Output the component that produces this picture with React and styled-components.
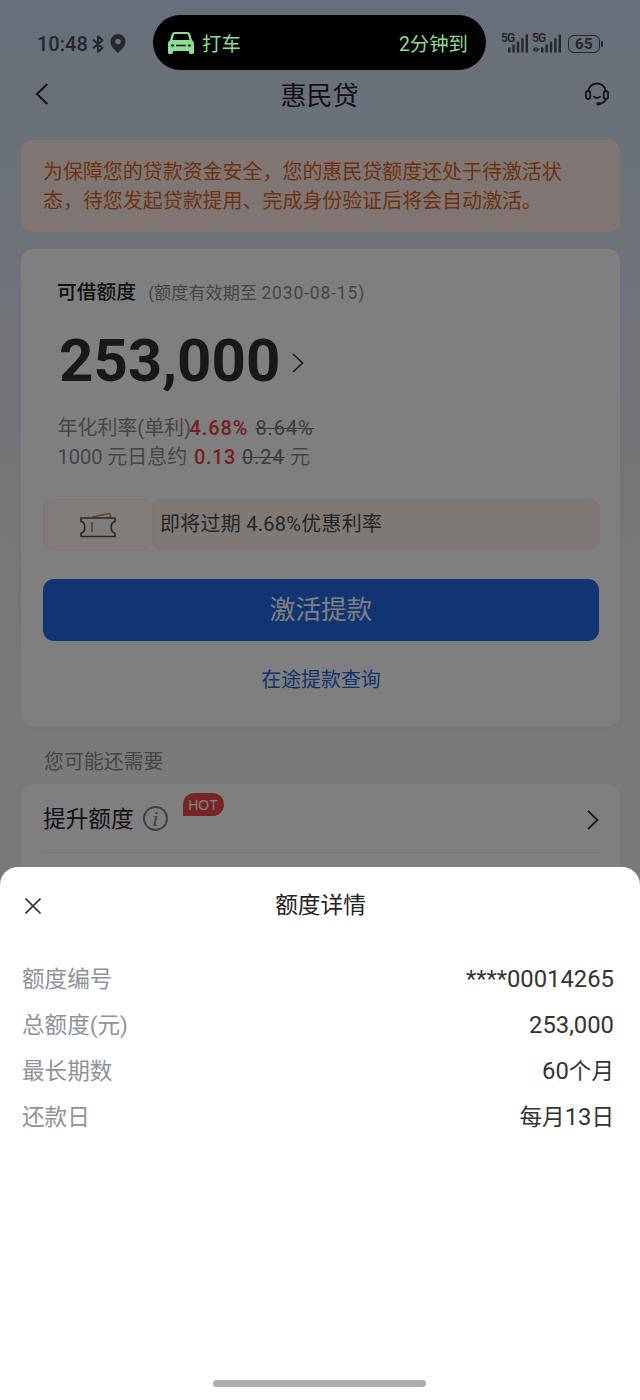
import React from 'react'
import styled, { createGlobalStyle } from 'styled-components'

const GlobalStyle = createGlobalStyle`
    * { box-sizing: border-box; }
    body {
        margin: 0;
        font-family: Roboto, "Noto Sans CJK SC", sans-serif;
        color: #333;
        -webkit-font-smoothing: antialiased;
    }
`

const details = [
    { label: '额度编号', number: '****00014265' },
    { label: '总额度(元)', number: '253,000' },
    { label: '最长期数', number: '60', after: '个月' },
    { label: '还款日', before: '每月', number: '13', after: '日' },
]

/* ---------- icons ---------- */

const Bluetooth = () => (
    <svg width="12" height="18" viewBox="0 0 12 18" fill="none" stroke="#4a4f5b" strokeWidth="2" strokeLinejoin="round">
        <path d="M1 4.800l9.600 8L6 16.800V1.200l4.600 4L1 13.200" />
    </svg>
)

const Pin = () => (
    <svg width="16" height="19" viewBox="0 0 16 19" fill="#4a4f5b" fillRule="evenodd">
        <path d="M8 0a7.600 7.600 0 0 1 7.600 7.600C15.600 12.400 10.600 16.800 8 19 5.400 16.800.4 12.400.4 7.600A7.600 7.600 0 0 1 8 0zm0 4.800a2.700 2.700 0 1 0 0 5.400 2.700 2.700 0 0 0 0-5.400z" />
    </svg>
)

const Car = () => (
    <svg width="28" height="24" viewBox="0 0 28 24">
        <path fill="#8fdc94" fillRule="evenodd" d="M8.300 1h11.400c2 0 3.200.8 3.700 2.600L25 9.200c1.400.8 2 2 2 3.600v8.700a1.500 1.500 0 0 1-1.500 1.500h-2a1.500 1.500 0 0 1-1.500-1.500V20H6v1.500A1.500 1.500 0 0 1 4.500 23h-2A1.500 1.500 0 0 1 1 21.500v-8.700c0-1.600.6-2.800 2-3.600l1.600-5.600C5.100 1.800 6.300 1 8.300 1zm.4 2c-1.200 0-1.700.4-2 1.500L5.500 9h17l-1.200-4.500c-.3-1.100-.8-1.500-2-1.500z" />
        <circle cx="5.600" cy="14.500" r="1.300" fill="#000" />
        <circle cx="22.400" cy="14.500" r="1.300" fill="#000" />
        <path d="M9 14.500h10" stroke="#000" strokeWidth="1.400" />
    </svg>
)

const Bars = ({ arrows }) => (
    <svg width="21" height="19" viewBox="0 0 21 19" overflow="visible" fill="#4a4f5b">
        <rect x="0" y="13.500" width="2.400" height="5" />
        <rect x="4.400" y="10.500" width="2.400" height="8" />
        <rect x="8.800" y="7.500" width="2.400" height="11" />
        <rect x="13.200" y="4.200" width="2.400" height="14.300" />
        <rect x="17.600" y="0.500" width="2.400" height="18" />
        {arrows && <path d="M-5.500 12.500v6l-2.800-3zM-4.500 12.500v6l2.800-3z" />}
    </svg>
)

const Back = () => (
    <svg width="14" height="22" viewBox="0 0 14 22" fill="none" stroke="#2d313b" strokeWidth="2.200">
        <path d="M12.300 1L2 11l10.300 10" />
    </svg>
)

const Chevron = ({ weight = 1.8 }) => (
    <svg width="12" height="20" viewBox="0 0 12 20" fill="none" stroke="#333" strokeWidth={weight}>
        <path d="M1 1l9.500 9L1 19" />
    </svg>
)

const Headset = () => (
    <svg width="26" height="26" viewBox="0 0 26 26" fill="none" stroke="#2d313b" strokeWidth="1.900" strokeLinecap="round">
        <path d="M4.200 10a8.900 8.900 0 0 1 17.600 0" />
        <rect x="2" y="10" width="4.200" height="8" rx="2.100" />
        <rect x="19.800" y="10" width="4.200" height="8" rx="2.100" />
        <path d="M10 15.700c1.600 1.800 4.400 1.800 6 0" />
        <path d="M22 18c-.8 3-3 4.200-7.500 4.800" />
        <path d="M13.800 22.800h1.600" strokeWidth="3" />
    </svg>
)

const Ticket = () => (
    <svg width="36" height="26" viewBox="0 0 36 26" fill="none" strokeWidth="1.600" strokeLinejoin="round">
        <path d="M12 5L29.500 1.500l1.500 4" stroke="#d98a5a" />
        <path d="M1 6h34v3.200c-2.600.8-3.800 3-3.800 6s1.200 5.200 3.800 6v3.300H1v-3.300c2.600-.8 3.800-3 3.800-6s-1.200-5.200-3.800-6z" stroke="#505050" />
        <path d="M12 10v10" stroke="#d98a5a" strokeWidth="2" />
    </svg>
)

const Close = () => (
    <svg width="16" height="16" viewBox="0 0 16 16" fill="none" stroke="#333" strokeWidth="1.600">
        <path d="M.5.500l15 15M15.500.500l-15 15" />
    </svg>
)

/* ---------- page ---------- */

const Phone = styled.div`
    position: relative;
    width: 640px;
    height: 1400px;
    overflow: hidden;
    background: linear-gradient(180deg, #cbe0f5 0, #d3e0f5 70px, #d5e3f6 140px, #dde5f3 240px, #e6e8f1 400px, #efeff1 520px, #f5f5f5 740px);
`

const StatusBar = styled.div`
    display: flex;
    align-items: center;
    height: 70px;
    padding: 17px 40px 0 37px;
`

const Clock = styled.span`
    width: 55px;
    font-size: 20px;
    font-weight: 500;
    line-height: 24px;
    color: #4a4f5b;
`

const StatusIcons = styled.div`
    display: flex;
    align-items: center;
    gap: 6px;
`

const Signals = styled.div`
    display: flex;
    align-items: center;
    margin-left: auto;
`

const Signal = styled.div`
    display: flex;
    align-items: flex-start;
    margin-right: ${props => props.$gap}px;
    svg { margin-left: ${props => props.$pull}px; }
`

const NetType = styled.span`
    width: 14px;
    margin-left: -1px;
    padding-right: 1px;
    font-size: 12px;
    line-height: 9px;
    font-weight: 600;
    letter-spacing: -.8px;
    color: #4a4f5b;
`

const Battery = styled.div`
    position: relative;
    display: flex;
    align-items: center;
    justify-content: center;
    width: 32px;
    height: 18px;
    border: 1.500px solid #4a4f5b;
    border-radius: 6px;
    font-size: 15px;
    font-weight: 700;
    line-height: 14px;
    letter-spacing: .5px;
    color: #4a4f5b;
    &::after {
        content: '';
        position: absolute;
        right: -4px;
        top: 5px;
        width: 2px;
        height: 6px;
        border-radius: 1px;
        background: #4a4f5b;
    }
`

const NavBar = styled.header`
    display: flex;
    align-items: center;
    justify-content: space-between;
    height: 48px;
    padding: 0 30px 0 35px;
`

const NavTitle = styled.h1`
    margin: 3px 0 0 6px;
    font-size: 26px;
    font-weight: 400;
    line-height: 36px;
    color: #222;
`

const Main = styled.main`
    display: flex;
    flex-direction: column;
    padding: 22px 20px 0 21px;
`

const Notice = styled.p`
    height: 92px;
    margin: 0 0 17px;
    padding: 18px 22px;
    border-radius: 12px;
    background: #ffede6;
    font-size: 19.970px;
    line-height: 29px;
    color: #dc6424;
`

const Card = styled.section`
    height: ${props => props.$height}px;
    padding: 0 21px 0 22px;
    border-radius: 12px;
    background: #fff;
    box-shadow: 0 2px 8px rgba(0, 0, 0, .04);
`

const LimitHead = styled.div`
    display: flex;
    align-items: center;
    gap: 12px;
    padding: 29px 15px 0 14px;
    line-height: 30px;
`

const LimitTitle = styled.h2`
    margin: 0;
    font-size: 19.800px;
    font-weight: 500;
    color: #222;
`

const LimitNote = styled.span`
    font-size: 17px;
    letter-spacing: .15px;
    color: #8c8c8c;
`

const LimitDate = styled.span`
    font-size: 17.500px;
    letter-spacing: .85px;
`

const Amount = styled.div`
    display: flex;
    align-items: center;
    gap: 12px;
    height: 70px;
    margin: 20px 0 16px;
    padding-left: 16px;
    font-size: 60px;
    font-weight: 700;
    line-height: 66px;
    color: #303030;
`

const AmountValue = styled.span`
    height: 70px;
`

const RateLine = styled.div`
    display: flex;
    padding-left: 14.500px;
    height: 29px;
    font-size: 19.970px;
    line-height: 29px;
    color: #8c8c8c;
    white-space: pre;
`

const Rate = styled.span`
    width: ${props => props.$width}px;
    letter-spacing: ${props => props.$spacing || 0}px;
    font-weight: ${props => (props.$hot ? 500 : 400)};
    color: ${props => (props.$hot ? '#ec4044' : 'inherit')};
`

const OldRate = styled.s`
    width: ${props => props.$width}px;
    letter-spacing: .9px;
    color: #777;
`

const Coupon = styled.div`
    display: flex;
    height: 51px;
    margin-top: 27px;
    color: #4c4c4c;
`

const CouponIcon = styled.div`
    display: flex;
    align-items: center;
    justify-content: center;
    width: 109px;
    border: 1px solid #fbeee8;
    border-right: none;
    border-radius: 9px;
    background: #fff8f5;
`

const CouponText = styled.div`
    flex: 1;
    padding-left: 7px;
    border: 1px solid #fbeae2;
    border-radius: 9px;
    background: #fff2ec;
    font-size: 19.970px;
    line-height: 49px;
    letter-spacing: .3px;
`

const Submit = styled.button`
    display: block;
    width: 100%;
    height: 62px;
    margin-top: 29px;
    padding: 0;
    border: none;
    border-radius: 11px;
    background: #2568e6;
    font-family: inherit;
    font-size: 25.600px;
    line-height: 63px;
    color: #fff;
`

const QueryLink = styled.a`
    display: block;
    margin-top: 25px;
    font-size: 19.900px;
    line-height: 30px;
    text-align: center;
    color: #2765e0;
`

const SectionTitle = styled.h3`
    margin: 0;
    padding: 22px 23px 0;
    height: 58px;
    font-size: 19.900px;
    font-weight: 400;
    line-height: 30px;
    color: #8c8c8c;
`

const MenuRow = styled.div`
    position: relative;
    display: flex;
    align-items: center;
    height: 69px;
    padding-top: 4px;
    border-bottom: 1px solid #f2f2f2;
    font-size: 22.700px;
    line-height: 34px;
    color: #222;
    > svg { margin-left: auto; }
`

const Info = styled.span`
    display: flex;
    align-items: center;
    justify-content: center;
    width: 25px;
    height: 25px;
    margin: -3px 0 0 9px;
    border: 2px solid #80838c;
    border-radius: 50%;
    font-family: "Liberation Serif", serif;
    font-size: 22px;
    font-style: italic;
    line-height: 20px;
    color: #80838c;
`

const HotBadge = styled.span`
    position: absolute;
    left: 139.500px;
    top: 9px;
    width: 41px;
    height: 23px;
    border-radius: 12px 12px 12px 0;
    background: #ec4a48;
    font-family: "Liberation Sans", sans-serif;
    font-size: 14px;
    line-height: 24px;
    text-align: center;
    color: #fff;
`

const Mask = styled.div`
    position: absolute;
    inset: 0;
    background: rgba(0, 0, 0, .5);
`

const Island = styled.div`
    position: absolute;
    left: 153px;
    top: 15px;
    display: flex;
    align-items: center;
    width: 333px;
    height: 55px;
    padding: 0 18px 0 14px;
    border-radius: 28px;
    background: #000;
    font-size: 19.400px;
    line-height: 28px;
    color: #8fdc94;
    svg { margin-right: 7px; }
`

const IslandText = styled.span`
    padding-top: 4px;
    &:last-child { margin-left: auto; }
`

const Sheet = styled.section`
    position: absolute;
    left: 0;
    right: 0;
    bottom: 0;
    display: flex;
    flex-direction: column;
    height: 533px;
    padding: 0 26px 13px 22px;
    border-radius: 18px 18px 0 0;
    background: #fff;
`

const SheetHead = styled.div`
    display: flex;
    align-items: center;
    height: 78px;
    margin-bottom: 12px;
    padding-left: 3px;
`

const SheetTitle = styled.h2`
    flex: 1;
    margin: 0 14px 0 0;
    font-size: 22.700px;
    font-weight: 400;
    line-height: 34px;
    text-align: center;
    color: #222;
`

const DetailRow = styled.div`
    display: flex;
    align-items: center;
    justify-content: space-between;
    height: 46px;
    font-size: 22.600px;
    line-height: 34px;
`

const Label = styled.span`
    color: #8e929b;
`

const Value = styled.span`
    margin: -2px 0 0;
    color: #333;
`

const Digits = styled.span`
    font-size: 23.800px;
`

const HomeBar = styled.div`
    width: 213px;
    height: 7px;
    margin: auto auto 0 191px;
    border-radius: 4px;
    background: #acacac;
`

function LoanPage() {
    return (
        <>
            <StatusBar>
                <Clock>10:48</Clock>
                <StatusIcons>
                    <Bluetooth />
                    <Pin />
                </StatusIcons>
                <Signals>
                    <Signal $pull={-7} $gap={4}>
                        <NetType>5G</NetType>
                        <Bars />
                    </Signal>
                    <Signal $pull={-5} $gap={6}>
                        <NetType>5G</NetType>
                        <Bars arrows />
                    </Signal>
                    <Battery>65</Battery>
                </Signals>
            </StatusBar>
            <NavBar>
                <Back />
                <NavTitle>惠民贷</NavTitle>
                <Headset />
            </NavBar>
            <Main>
                <Notice>为保障您的贷款资金安全，您的惠民贷额度还处于待激活状态，待您发起贷款提用、完成身份验证后将会自动激活。</Notice>
                <Card $height={477}>
                    <LimitHead>
                        <LimitTitle>可借额度</LimitTitle>
                        <LimitNote>(额度有效期至 <LimitDate>2030-08-15)</LimitDate></LimitNote>
                    </LimitHead>
                    <Amount>
                        <AmountValue>253,000</AmountValue>
                        <Chevron weight={1.6} />
                    </Amount>
                    <RateLine>
                        <Rate $width={132}>年化利率(单利)</Rate>
                        <Rate $hot $width={66} $spacing={0.9}>4.68%</Rate>
                        <OldRate $width={60}>8.64%</OldRate>
                    </RateLine>
                    <RateLine>
                        <Rate $width={136.5}>1000 元日息约</Rate>
                        <Rate $hot $width={48} $spacing={0.6}>0.13</Rate>
                        <OldRate $width={43}>0.24</OldRate>
                        <Rate> 元</Rate>
                    </RateLine>
                    <Coupon>
                        <CouponIcon><Ticket /></CouponIcon>
                        <CouponText>即将过期 4.68%优惠利率</CouponText>
                    </Coupon>
                    <Submit>激活提款</Submit>
                    <QueryLink>在途提款查询</QueryLink>
                </Card>
                <SectionTitle>您可能还需要</SectionTitle>
                <Card $height={200}>
                    <MenuRow>
                        提升额度
                        <Info>i</Info>
                        <HotBadge>HOT</HotBadge>
                        <Chevron weight={1.8} />
                    </MenuRow>
                </Card>
            </Main>
        </>
    )
}

function DetailSheet() {
    return (
        <Sheet>
            <SheetHead>
                <Close />
                <SheetTitle>额度详情</SheetTitle>
            </SheetHead>
            {details.map(item => (
                <DetailRow key={item.label}>
                    <Label>{item.label}</Label>
                    <Value>{item.before}<Digits>{item.number}</Digits>{item.after}</Value>
                </DetailRow>
            ))}
            <HomeBar />
        </Sheet>
    )
}

export default function App() {
    return (
        <Phone>
            <GlobalStyle />
            <LoanPage />
            <Mask />
            <Island>
                <Car />
                <IslandText>打车</IslandText>
                <IslandText>2分钟到</IslandText>
            </Island>
            <DetailSheet />
        </Phone>
    )
}
